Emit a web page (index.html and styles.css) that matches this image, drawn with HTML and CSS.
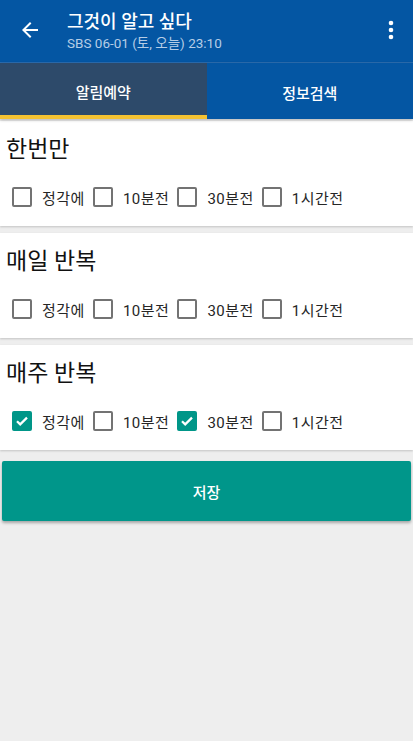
FILE: index.html
```html
<!DOCTYPE html>
<html lang="ko">
<head>
<meta charset="utf-8">
<link rel="stylesheet" href="styles.css">
</head>
<body>
<header class="appbar">
  <svg class="back" width="24" height="24" viewBox="0 0 24 24"><path d="M20 11H7.83l5.59-5.59L12 4l-8 8 8 8 1.41-1.41L7.83 13H20v-2z" fill="#fff"/></svg>
  <div class="titles">
    <div class="title">그것이 알고 싶다</div>
    <div class="subtitle">SBS 06-01 (토, 오늘) 23:10</div>
  </div>
  <svg class="more" width="6" height="20" viewBox="0 0 6 20"><circle cx="3" cy="3" r="2.3" fill="#fff"/><circle cx="3" cy="10" r="2.3" fill="#fff"/><circle cx="3" cy="17" r="2.3" fill="#fff"/></svg>
</header>
<nav class="tabs">
  <div class="tab active">알림예약</div>
  <div class="tab">정보검색</div>
</nav>
<main class="content">
  <section class="card">
    <h2 class="card-title">한번만</h2>
    <div class="row">
      <label class="opt"><span class="box"></span>정각에</label>
      <label class="opt"><span class="box"></span>10분전</label>
      <label class="opt"><span class="box"></span>30분전</label>
      <label class="opt"><span class="box"></span>1시간전</label>
    </div>
  </section>
  <section class="card">
    <h2 class="card-title">매일 반복</h2>
    <div class="row">
      <label class="opt"><span class="box"></span>정각에</label>
      <label class="opt"><span class="box"></span>10분전</label>
      <label class="opt"><span class="box"></span>30분전</label>
      <label class="opt"><span class="box"></span>1시간전</label>
    </div>
  </section>
  <section class="card">
    <h2 class="card-title">매주 반복</h2>
    <div class="row">
      <label class="opt"><span class="box checked"><svg width="14" height="14" viewBox="0 0 14 14"><path d="M2 7.2l3.2 3.2L12 3.6" stroke="#fff" stroke-width="2.2" fill="none"/></svg></span>정각에</label>
      <label class="opt"><span class="box"></span>10분전</label>
      <label class="opt"><span class="box checked"><svg width="14" height="14" viewBox="0 0 14 14"><path d="M2 7.2l3.2 3.2L12 3.6" stroke="#fff" stroke-width="2.2" fill="none"/></svg></span>30분전</label>
      <label class="opt"><span class="box"></span>1시간전</label>
    </div>
  </section>
  <button class="save">저장</button>
</main>
</body>
</html>
```
FILE: styles.css
```css
* { box-sizing: border-box; }
html, body { margin: 0; padding: 0; }
body {
  background: #eeeeee;
  font-family: Roboto, "Noto Sans CJK KR", sans-serif;
  width: 413px;
  height: 741px;
  overflow: hidden;
}
.appbar {
  height: 63px;
  background: #0456a3;
  border-bottom: 1px solid #2b6db0;
  display: flex;
  align-items: center;
  padding: 0 0 0 18px;
}
.back { flex: none; margin-top: -2px; }
.titles {
  flex: 1;
  margin-left: 25px;
  display: flex;
  flex-direction: column;
  margin-top: 0;
}
.title {
  color: #fff;
  font-size: 18px;
  font-weight: 500;
  line-height: 22px;
}
.subtitle {
  color: #b6cde6;
  font-size: 13.5px;
  line-height: 18px;
  margin-top: 1px;
}
.more { flex: none; margin-right: 19px; margin-top: -2px; }
.tabs {
  display: flex;
  height: 56px;
  background: #0456a3;
  box-shadow: 0 1px 3px rgba(0,0,0,0.25);
  position: relative;
  z-index: 1;
}
.tab {
  flex: 1;
  display: flex;
  align-items: center;
  justify-content: center;
  color: #fff;
  font-size: 15px;
  font-weight: 500;
  padding-top: 2px;
}
.tab.active {
  background: #2d4a6a;
  border-bottom: 4px solid #f4c232;
  padding-top: 4px;
}
.content {
  padding-top: 2px;
  display: flex;
  flex-direction: column;
  gap: 7px;
}
.card {
  background: #fff;
  height: 105px;
  padding: 14px 0 0 6px;
  box-shadow: 0 1px 2px rgba(0,0,0,0.18);
}
.card-title {
  margin: 0;
  font-size: 23px;
  font-weight: 400;
  line-height: 30px;
  color: #111;
}
.row {
  display: flex;
  align-items: center;
  margin-top: 20px;
  height: 24px;
  padding-left: 6px;
}
.opt {
  display: flex;
  align-items: center;
  font-size: 15px;
  letter-spacing: 0.5px;
  color: #262626;
  margin-right: 8px;
}
.box {
  width: 20px;
  height: 20px;
  border: 2px solid #737373;
  border-radius: 2px;
  margin-right: 10px;
  display: flex;
  align-items: center;
  justify-content: center;
}
.box.checked {
  background: #009688;
  border-color: #009688;
}
.save {
  margin: 4px 2px 0;
  height: 60px;
  background: #00968a;
  border: none;
  border-radius: 2px;
  color: #fff;
  font-family: inherit;
  font-size: 15px;
  font-weight: 500;
  box-shadow: 0 2px 3px rgba(0,0,0,0.3);
}
```
